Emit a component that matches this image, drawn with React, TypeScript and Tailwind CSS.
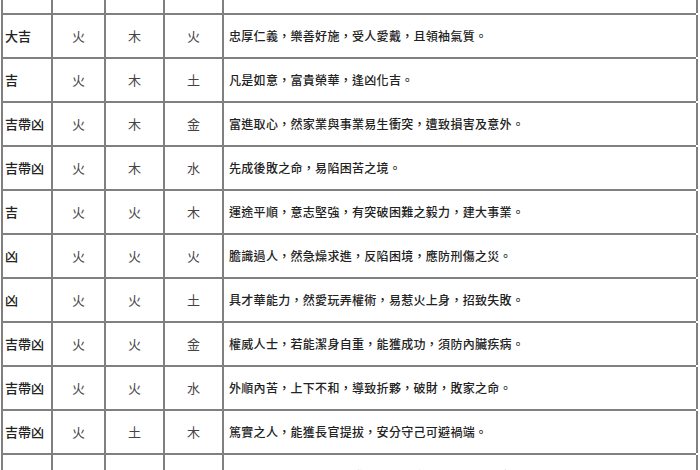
const rows = [
  ["大吉", "火", "木", "木", "成功順利，向上發展，基礎穩固，名利雙收。"],
  ["大吉", "火", "木", "火", "忠厚仁義，樂善好施，受人愛戴，且領袖氣質。"],
  ["吉", "火", "木", "土", "凡是如意，富貴榮華，逢凶化吉。"],
  ["吉帶凶", "火", "木", "金", "富進取心，然家業與事業易生衝突，遭致損害及意外。"],
  ["吉帶凶", "火", "木", "水", "先成後敗之命，易陷困苦之境。"],
  ["吉", "火", "火", "木", "運途平順，意志堅強，有突破困難之毅力，建大事業。"],
  ["凶", "火", "火", "火", "膽識過人，然急燥求進，反陷困境，應防刑傷之災。"],
  ["凶", "火", "火", "土", "具才華能力，然愛玩弄權術，易惹火上身，招致失敗。"],
  ["吉帶凶", "火", "火", "金", "權威人士，若能潔身自重，能獲成功，須防內臟疾病。"],
  ["吉帶凶", "火", "火", "水", "外順內苦，上下不和，導致折夥，破財，敗家之命。"],
  ["吉帶凶", "火", "土", "木", "篤實之人，能獲長官提拔，安分守己可避禍端。"],
  ["大吉", "火", "土", "火", "有貴人扶持，可望成功發展，得享富貴榮華，晚年安泰。"],
];

export default function App() {
  return (
    <div
      className="w-[700px] h-[470px] overflow-hidden bg-white text-[#222]"
      style={{ fontFamily: '"Noto Sans CJK TC", "Noto Sans", sans-serif' }}
    >
      <div className="ml-[1px] -mt-[29px] w-[695px] border-l-2 border-[#808080]">
        {rows.map((r, i) => (
          <div
            key={i}
            className="grid grid-cols-[50px_53px_59px_59px_474px] h-[44px] border-b-2 border-[#808080]"
          >
            <div className="flex items-center pl-[2px] border-r-2 border-[#808080] text-[13px] font-medium">
              {r[0]}
            </div>
            <div className="flex items-center justify-center border-r-2 border-[#808080] text-[13px] text-[#444]">
              {r[1]}
            </div>
            <div className="flex items-center justify-center border-r-2 border-[#808080] text-[13px] text-[#444]">
              {r[2]}
            </div>
            <div className="flex items-center justify-center border-r-2 border-[#808080] text-[13px] text-[#444]">
              {r[3]}
            </div>
            <div className="flex items-center pl-[5px] border-r-2 border-[#808080] text-[12px] font-medium tracking-[0.3px]">
              {r[4]}
            </div>
          </div>
        ))}
      </div>
    </div>
  );
}
